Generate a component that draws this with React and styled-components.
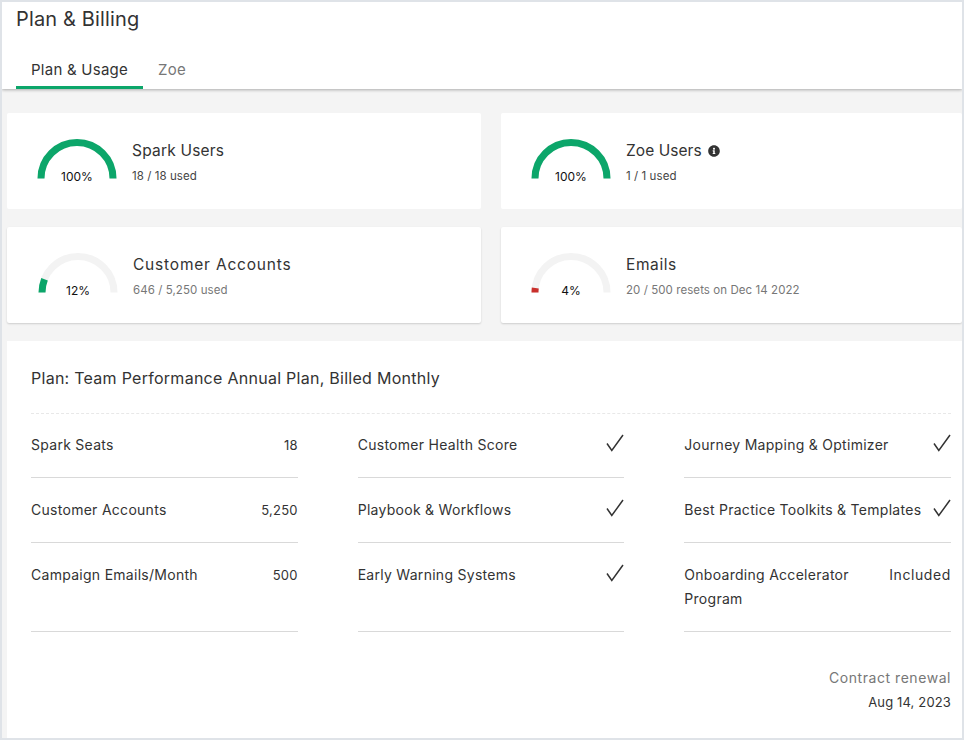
import React from 'react'
import styled, { createGlobalStyle } from 'styled-components'
import { FaInfoCircle } from 'react-icons/fa'

const GlobalStyle = createGlobalStyle`
  * {
    box-sizing: border-box;
  }
  html, body {
    margin: 0;
    padding: 0;
    background: #f4f4f4;
    font-family: 'Inter', 'Open Sans', sans-serif;
    color: #2b2b2b;
  }
`

const GREEN = '#0ca66a'
const RED = '#c9302c'

const Page = styled.div`
  width: 964px;
  height: 740px;
  border: 2px solid #dfe3e8;
  background: #f4f4f4;
  display: flex;
  flex-direction: column;
  overflow: hidden;
`

const Header = styled.header`
  height: 87px;
  flex: none;
  background: #fff;
  padding: 0 14px;
  display: flex;
  flex-direction: column;
  justify-content: space-between;
  box-shadow: 0 1px 3px rgba(0, 0, 0, 0.3);
  position: relative;
`

const Title = styled.h1`
  margin: 4px 0 0;
  font-size: 20px;
  line-height: 26px;
  font-weight: 400;
  letter-spacing: 0.15px;
  color: #333;
`

const Tabs = styled.nav`
  display: flex;
`

const Tab = styled.div`
  padding: 0 15px;
  height: 37px;
  line-height: 36px;
  font-size: 15px;
  letter-spacing: 0.25px;
  color: ${(p) => (p.$active ? '#333' : '#777')};
  border-bottom: 3px solid ${(p) => (p.$active ? GREEN : 'transparent')};
`

const Content = styled.main`
  flex: 1;
  padding: 24px 0 0 5px;
  display: flex;
  flex-direction: column;
  gap: 18px;
`

const StatGrid = styled.section`
  display: grid;
  grid-template-columns: 474px 461px;
  column-gap: 20px;
  row-gap: 18px;
`

const StatCard = styled.article`
  height: 96px;
  background: #fff;
  border-radius: 2px;
  padding: 26px 0 0 ${(p) => (p.$inset ? 31 : 30)}px;
  display: flex;
  gap: 15px;
  box-shadow: ${(p) => (p.$raised ? '0 1px 2px rgba(0, 0, 0, 0.16)' : 'none')};
`

const GaugeWrap = styled.div`
  position: relative;
  width: 80px;
  height: 40px;
  flex: none;
`

const GaugeLabel = styled.span`
  position: absolute;
  left: 0;
  right: 0;
  bottom: -7px;
  text-align: center;
  font-size: 12px;
  line-height: 18px;
  color: #111;
`

const StatText = styled.div`
  display: flex;
  flex-direction: column;
  padding-top: 1px;
`

const StatTitle = styled.div`
  font-size: 15.5px;
  line-height: 22px;
  letter-spacing: ${(p) => p.$tracking ?? 0.2}px;
  color: #333;
  display: flex;
  align-items: center;
  gap: 6px;

  svg {
    width: 12px;
    height: 12px;
    color: #333;
  }
`

const StatSub = styled.div`
  margin-top: 6px;
  font-size: 11.5px;
  line-height: 16px;
  letter-spacing: 0.07px;
  color: ${(p) => (p.$muted ? '#777' : '#444')};
`

const PlanCard = styled.section`
  flex: 1;
  background: #fff;
  padding: 26px 11px 0 24px;
`

const PlanTitle = styled.h2`
  margin: 0;
  padding-bottom: 24px;
  font-size: 16px;
  line-height: 22px;
  font-weight: 400;
  letter-spacing: 0.27px;
  color: #333;
  border-bottom: 1px dashed #e8e8e8;
`

const FeatureGrid = styled.div`
  display: grid;
  grid-template-columns: repeat(3, 1fr);
  column-gap: 60px;
`

const Feature = styled.div`
  display: flex;
  justify-content: space-between;
  align-items: flex-start;
  gap: 10px;
  padding: 20px 0;
  border-bottom: 1px solid #d9d9d9;
  font-size: 14px;
  line-height: 24px;
  letter-spacing: 0.28px;
  color: #333;

  &:nth-child(-n + 3) {
    padding: 19px 0 20px;
  }
`

const FeatureName = styled.span`
  max-width: ${(p) => (p.$narrow ? '190px' : 'none')};
`

const FeatureValue = styled.span`
  font-size: ${(p) => (p.$word ? 14 : 13)}px;
  letter-spacing: ${(p) => (p.$word ? 0.6 : 0.2)}px;
`

const Renewal = styled.div`
  margin-top: 34px;
  text-align: right;
  font-size: 13px;
  line-height: 24px;
  letter-spacing: 0.15px;
  color: #333;
`

const RenewalLabel = styled.div`
  font-size: 14px;
  letter-spacing: 0.55px;
  color: #777;
`

function Gauge({ percent, color }) {
  const r = 36
  const cy = 39.5
  const angle = Math.PI * (percent / 100)
  const x = 40 - r * Math.cos(angle)
  const y = cy - r * Math.sin(angle)
  return (
    <GaugeWrap>
      <svg width="80" height="40" viewBox="0 0 80 40">
        <path d={`M4 ${cy}A${r} ${r} 0 0 1 76 ${cy}`} fill="none" stroke="#f3f3f3" strokeWidth="7" />
        <path d={`M4 ${cy}A${r} ${r} 0 0 1 ${x} ${y}`} fill="none" stroke={color} strokeWidth="7" />
      </svg>
      <GaugeLabel>{percent}%</GaugeLabel>
    </GaugeWrap>
  )
}

function Check() {
  return (
    <svg width="18" height="18" viewBox="0 0 18 18" style={{ flex: 'none', marginTop: 1 }}>
      <path d="M1 9.5 5.8 16.5 17 1" fill="none" stroke="#333" strokeWidth="1.5" />
    </svg>
  )
}

const features = [
  { name: 'Spark Seats', value: '18' },
  { name: 'Customer Health Score', check: true },
  { name: 'Journey Mapping & Optimizer', check: true },
  { name: 'Customer Accounts', value: '5,250' },
  { name: 'Playbook & Workflows', check: true },
  { name: 'Best Practice Toolkits & Templates', check: true },
  { name: 'Campaign Emails/Month', value: '500' },
  { name: 'Early Warning Systems', check: true },
  { name: 'Onboarding Accelerator Program', value: 'Included', narrow: true },
]

export default function App() {
  return (
    <>
      <GlobalStyle />
      <Page>
        <Header>
          <Title>Plan &amp; Billing</Title>
          <Tabs>
            <Tab $active>Plan &amp; Usage</Tab>
            <Tab>Zoe</Tab>
          </Tabs>
        </Header>
        <Content>
          <StatGrid>
            <StatCard>
              <Gauge percent={100} color={GREEN} />
              <StatText>
                <StatTitle>Spark Users</StatTitle>
                <StatSub>18 / 18 used</StatSub>
              </StatText>
            </StatCard>
            <StatCard>
              <Gauge percent={100} color={GREEN} />
              <StatText>
                <StatTitle $tracking={0.05}>
                  Zoe Users <FaInfoCircle />
                </StatTitle>
                <StatSub>1 / 1 used</StatSub>
              </StatText>
            </StatCard>
            <StatCard $inset $raised>
              <Gauge percent={12} color={GREEN} />
              <StatText>
                <StatTitle $tracking={0.8}>Customer Accounts</StatTitle>
                <StatSub $muted>646 / 5,250 used</StatSub>
              </StatText>
            </StatCard>
            <StatCard $raised>
              <Gauge percent={4} color={RED} />
              <StatText>
                <StatTitle $tracking={0.6}>Emails</StatTitle>
                <StatSub $muted>20 / 500 resets on Dec 14 2022</StatSub>
              </StatText>
            </StatCard>
          </StatGrid>
          <PlanCard>
            <PlanTitle>Plan: Team Performance Annual Plan, Billed Monthly</PlanTitle>
            <FeatureGrid>
              {features.map((f) => (
                <Feature key={f.name}>
                  <FeatureName $narrow={f.narrow}>{f.name}</FeatureName>
                  {f.check ? <Check /> : <FeatureValue $word={f.narrow}>{f.value}</FeatureValue>}
                </Feature>
              ))}
            </FeatureGrid>
            <Renewal>
              <RenewalLabel>Contract renewal</RenewalLabel>
              Aug 14, 2023
            </Renewal>
          </PlanCard>
        </Content>
      </Page>
    </>
  )
}
